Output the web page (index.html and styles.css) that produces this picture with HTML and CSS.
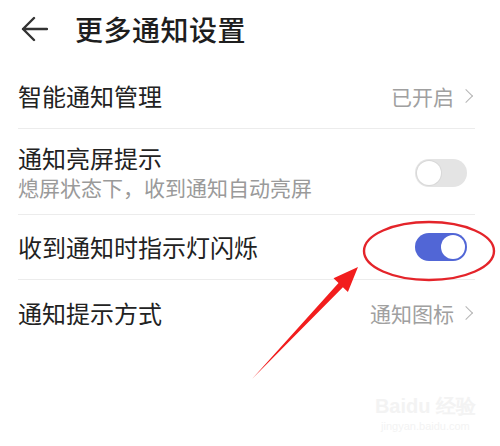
FILE: index.html
```html
<!DOCTYPE html>
<html>
    <head>
        <meta name="viewport" content="width=device-width, initial-scale=1" />
        <meta http-equiv="content-type" content="text/html; charset=utf-8" />
        <title>更多通知设置</title>
        <link rel="stylesheet" href="styles.css">
    </head>
    <body>
        <div class="page">
            <div class="header">
                <svg class="back" width="28" height="28" viewBox="0 0 28 28">
                    <path d="M27 14H3M14 3L3 14L14 25" fill="none" stroke="#333" stroke-width="2.4" stroke-linecap="round" stroke-linejoin="round"/>
                </svg>
                <h1>更多通知设置</h1>
            </div>
            <div class="list">
                <div class="row">
                    <div class="label">智能通知管理</div>
                    <div class="value">已开启<span class="chev"></span></div>
                </div>
                <div class="row tall">
                    <div>
                        <div class="label">通知亮屏提示</div>
                        <div class="sub">熄屏状态下，收到通知自动亮屏</div>
                    </div>
                    <div class="switch"><span class="knob"></span></div>
                </div>
                <div class="row">
                    <div class="label">收到通知时指示灯闪烁</div>
                    <div class="switch on"><span class="knob"></span></div>
                </div>
                <div class="row last">
                    <div class="label">通知提示方式</div>
                    <div class="value">通知图标<span class="chev"></span></div>
                </div>
            </div>
        </div>
        <!-- annotation drawn over the screenshot -->
        <svg class="marks" width="500" height="446" viewBox="0 0 500 446">
            <ellipse cx="429" cy="251" rx="65" ry="29" fill="none" stroke="#e4242a" stroke-width="2.4"/>
            <polygon points="252,379 342.9,287.2 347.9,292 358,267 333.5,278.2 338.5,283" fill="#f21d1d"/>
        </svg>
        <div class="watermark">
            <div class="wm-logo">Bai<span>du</span> 经验</div>
            <div class="wm-url">jingyan.baidu.com</div>
        </div>
    </body>
</html>
```

FILE: styles.css
```css
*{
    box-sizing: border-box;
    padding: 0;
    margin: 0;
}
body{
    width: 500px;
    height: 446px;
    background: #fff;
    color: #222;
    font-family: "Noto Sans CJK SC", "Noto Sans", sans-serif;
    overflow: hidden;
    position: relative;
}
.page{
    padding: 0 25px 0 18px;
}
.header{
    display: flex;
    align-items: center;
    height: 64px;
    padding-bottom: 6px;
}
.back{
    margin-left: 2px;
    margin-right: 27px;
}
.header h1{
    font-size: 28px;
    font-weight: 500;
    color: #1e1e1e;
    line-height: 1;
    letter-spacing: 0.5px;
}
.row{
    display: flex;
    justify-content: space-between;
    align-items: center;
    height: 65px;
    border-bottom: 1px solid #ececec;
}
.row.tall{
    height: 86px;
    padding-top: 2px;
}
.row.last{
    border-bottom: none;
    height: 66px;
}
.label{
    font-size: 24px;
    line-height: 30px;
    color: #222;
}
.sub{
    font-size: 21px;
    line-height: 29px;
    color: #9a9a9a;
}
.value{
    display: flex;
    align-items: center;
    font-size: 21px;
    color: #a0a0a0;
}
.chev{
    width: 10px;
    height: 10px;
    border-top: 1.5px solid #b5b5b5;
    border-right: 1.5px solid #b5b5b5;
    transform: rotate(45deg);
    margin-left: 7px;
    margin-right: 4px;
}
.switch{
    width: 52px;
    height: 28px;
    border-radius: 14px;
    background: #e4e4e4;
    padding: 2px;
    display: flex;
    margin-right: 8px;
}
.knob{
    width: 24px;
    height: 24px;
    border-radius: 50%;
    background: #fff;
    box-shadow: 0 0 0 1px #d8d8d8;
}
.switch.on{
    background: #5166d6;
    justify-content: flex-end;
}
.switch.on .knob{
    box-shadow: none;
}
.marks{
    position: absolute;
    top: 0;
    left: 0;
    pointer-events: none;
}
.watermark{
    position: absolute;
    right: 24px;
    bottom: 14px;
    color: #f3f3f3;
    font-family: "Liberation Sans", sans-serif;
    text-align: center;
}
.wm-logo{
    font-size: 20px;
    font-weight: bold;
}
.wm-url{
    font-size: 11px;
}
```
